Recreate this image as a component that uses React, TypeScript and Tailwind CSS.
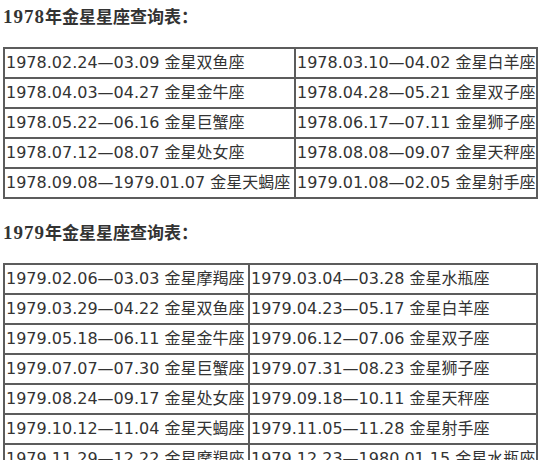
import React from 'react';

type Row = [string, string];

const table1978: Row[] = [
  ['1978.02.24—03.09 金星双鱼座', '1978.03.10—04.02 金星白羊座'],
  ['1978.04.03—04.27 金星金牛座', '1978.04.28—05.21 金星双子座'],
  ['1978.05.22—06.16 金星巨蟹座', '1978.06.17—07.11 金星狮子座'],
  ['1978.07.12—08.07 金星处女座', '1978.08.08—09.07 金星天秤座'],
  ['1978.09.08—1979.01.07 金星天蝎座', '1979.01.08—02.05 金星射手座'],
];

const table1979: Row[] = [
  ['1979.02.06—03.03 金星摩羯座', '1979.03.04—03.28 金星水瓶座'],
  ['1979.03.29—04.22 金星双鱼座', '1979.04.23—05.17 金星白羊座'],
  ['1979.05.18—06.11 金星金牛座', '1979.06.12—07.06 金星双子座'],
  ['1979.07.07—07.30 金星巨蟹座', '1979.07.31—08.23 金星狮子座'],
  ['1979.08.24—09.17 金星处女座', '1979.09.18—10.11 金星天秤座'],
  ['1979.10.12—11.04 金星天蝎座', '1979.11.05—11.28 金星射手座'],
  ['1979.11.29—12.22 金星摩羯座', '1979.12.23—1980.01.15 金星水瓶座'],
];

const Heading: React.FC<{ year: string }> = ({ year }) => (
  <h2 className="h-[26px] leading-[26px] font-bold text-[#333] whitespace-nowrap">
    <span className="text-[19px] tracking-[1px] font-['Liberation_Serif',serif]">{year}</span>
    <span className="text-[17px] font-['Noto_Sans_CJK_SC',sans-serif]">年金星星座查询表：</span>
  </h2>
);

const VenusTable: React.FC<{ rows: Row[]; firstCol: string }> = ({ rows, firstCol }) => (
  <table className="w-[535px] table-fixed border-collapse border-2 border-[#5c5c5c] text-[16px] text-[#333] font-['DejaVu_Sans','Noto_Sans_CJK_SC',sans-serif]">
    <colgroup>
      <col className={firstCol} />
      <col />
    </colgroup>
    <tbody>
      {rows.map((r, i) => (
        <tr key={i}>
          {r.map((c) => (
            <td key={c} className="border-2 border-[#5c5c5c] px-[1px] py-[2px] leading-[24px] whitespace-nowrap overflow-hidden">
              {c}
            </td>
          ))}
        </tr>
      ))}
    </tbody>
  </table>
);

export default function App() {
  return (
    <div className="w-[555px] h-[460px] overflow-hidden bg-white pl-[3px] pt-[3px]">
      <Heading year="1978" />
      <div className="mt-[18px]">
        <VenusTable rows={table1978} firstCol="w-[291px]" />
      </div>
      <div className="mt-[20px]">
        <Heading year="1979" />
      </div>
      <div className="mt-[18px]">
        <VenusTable rows={table1979} firstCol="w-[245px]" />
      </div>
    </div>
  );
}
